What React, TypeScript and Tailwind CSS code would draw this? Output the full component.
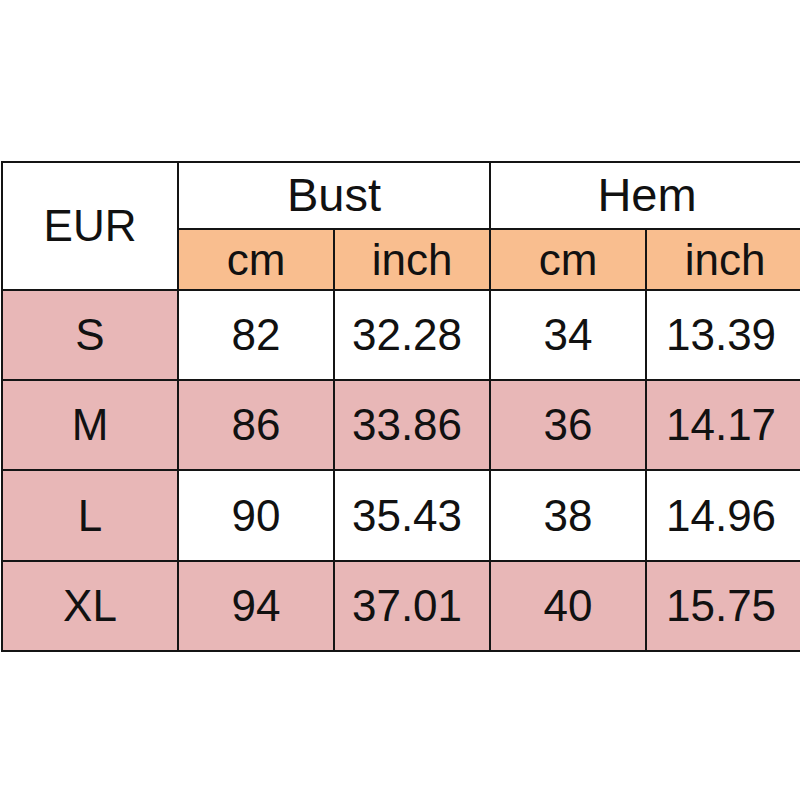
const PINK = "bg-[#e8b7b7]";

const rows = [
  { size: "S", bust: ["82", "32.28"], hem: ["34", "13.39"], shaded: false, h: "h-[90px]" },
  { size: "M", bust: ["86", "33.86"], hem: ["36", "14.17"], shaded: true, h: "h-[90px]" },
  { size: "L", bust: ["90", "35.43"], hem: ["38", "14.96"], shaded: false, h: "h-[91px]" },
  { size: "XL", bust: ["94", "37.01"], hem: ["40", "15.75"], shaded: true, h: "h-[90px]" },
];

const cell = "border-2 border-[#141414] text-center align-middle p-0";

export default function App() {
  return (
    <div
      className="h-[800px] w-[800px] overflow-hidden bg-white pt-[161px] pl-[1px] text-[#111]"
      style={{ fontFamily: '"Liberation Sans", Arial, sans-serif' }}
    >
      <table className="w-[802px] table-fixed border-collapse text-[44px] leading-none">
        <colgroup>
          <col className="w-[176px]" />
          <col className="w-[156px]" />
          <col className="w-[156px]" />
          <col className="w-[156px]" />
          <col className="w-[158px]" />
        </colgroup>
        <thead>
          <tr className="h-[67px]">
            <th rowSpan={2} className={`${cell} bg-white font-normal`}>
              EUR
            </th>
            <th colSpan={2} className={`${cell} bg-white pb-[2px] text-[47px] font-normal`}>
              Bust
            </th>
            <th colSpan={2} className={`${cell} bg-white pb-[2px] text-[47px] font-normal`}>
              Hem
            </th>
          </tr>
          <tr className="h-[61px]">
            <th className={`${cell} bg-[#f9be8f] font-normal`}>cm</th>
            <th className={`${cell} bg-[#f9be8f] font-normal`}>inch</th>
            <th className={`${cell} bg-[#f9be8f] font-normal`}>cm</th>
            <th className={`${cell} bg-[#f9be8f] font-normal`}>inch</th>
          </tr>
        </thead>
        <tbody>
          {rows.map((r) => {
            const bg = r.shaded ? PINK : "bg-white";
            return (
              <tr key={r.size} className={r.h}>
                <td className={`${cell} ${PINK}`}>{r.size}</td>
                <td className={`${cell} ${bg}`}>{r.bust[0]}</td>
                <td className={`${cell} ${bg} pr-[10px]`}>{r.bust[1]}</td>
                <td className={`${cell} ${bg}`}>{r.hem[0]}</td>
                <td className={`${cell} ${bg} pr-[8px]`}>{r.hem[1]}</td>
              </tr>
            );
          })}
        </tbody>
      </table>
    </div>
  );
}
